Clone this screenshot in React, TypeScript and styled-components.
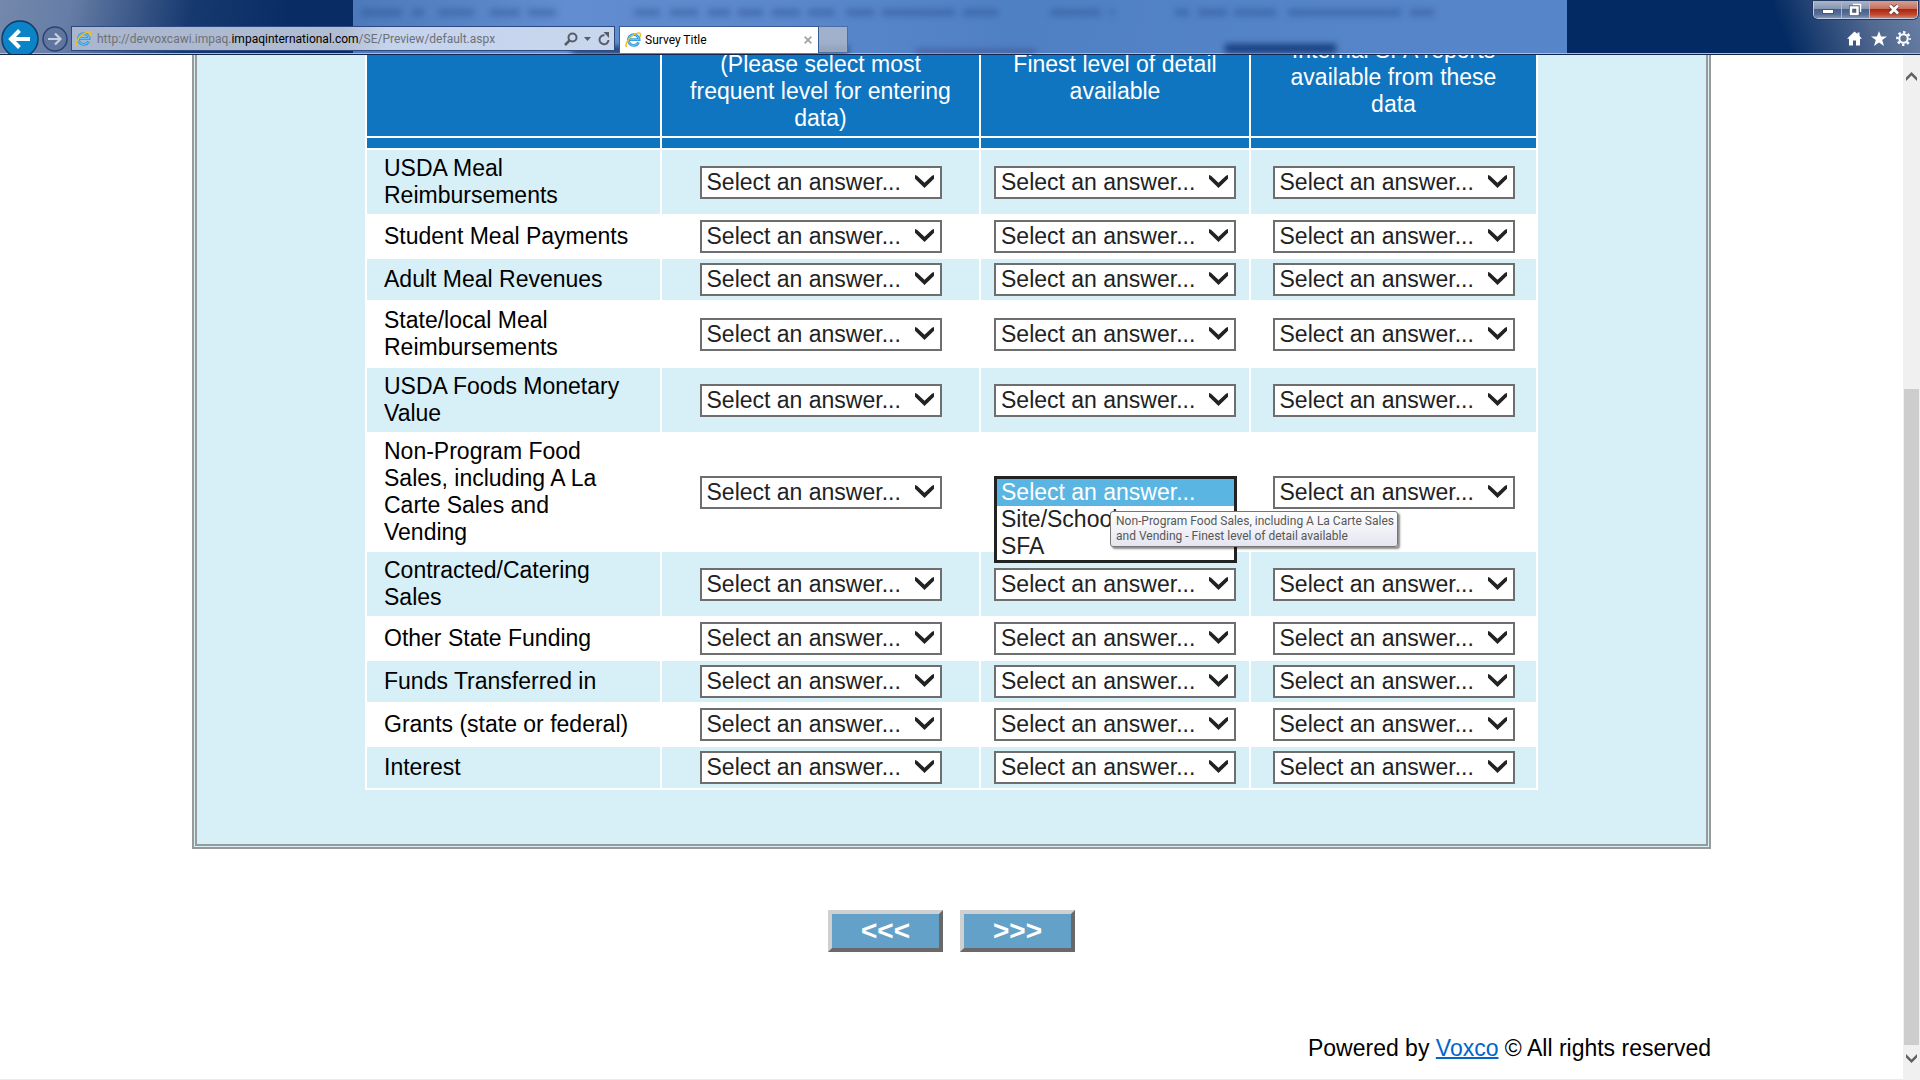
import React from "react";
import styled, { createGlobalStyle } from "styled-components";

const GlobalStyle = createGlobalStyle`
  *, *::before, *::after { box-sizing: border-box; }
  html, body, #root { height: 100%; }
  body {
    margin: 0;
    overflow: hidden;
    background: #fff;
    color: #000;
    font: 23px/27px "Liberation Sans", Arial, sans-serif;
  }
`;

const uiFont = `Roboto, "Open Sans", sans-serif`;

const Window = styled.div`
  display: flex;
  flex-direction: column;
  height: 100vh;
`;

/* ---------- browser frame ---------- */

const TitleBar = styled.header`
  position: relative;
  display: flex;
  align-items: flex-end;
  flex: none;
  height: 55px;
  padding-left: 1px;
  overflow: hidden;
  border-bottom: 1px solid #14254d;
  box-shadow: inset 0 -1px 0 #a9bde2;
  background:
    linear-gradient(100deg, #7388ab 0, #667da6 70px, #16396f 190px, #0a2c65 290px, #0a2c65 100%) 0 0 / 353px 100% no-repeat,
    linear-gradient(70deg, #032a62 0, #032a62 60%, #50678f 84%, #6a80a6 100%) 100% 0 / 353px 100% no-repeat,
    linear-gradient(100deg, #4d7abc 353px, #628dd0 560px, #5a87cb 800px, #5080c4 1000px, #5584c8 1300px, #5b88cc 100%);
`;

const Glass = styled.svg`
  position: absolute;
  inset: 0;
  width: 100%;
  height: 53px;
  filter: blur(3px);
`;

const NavButton = styled.button`
  position: relative;
  display: block;
  padding: 0;
  border: 0;
  background: none;
  line-height: 0;
`;

const ForwardButton = styled(NavButton)`
  margin: 0 3px 2px;
`;

const AddressBar = styled.form`
  position: relative;
  display: flex;
  align-items: center;
  width: 544px;
  height: 25px;
  margin: 0 4px 3px 0;
  padding: 0 3px;
  border: 1px solid #2d4a80;
  background: linear-gradient(90deg, #a9b6cd, #b1bdd3 50%, #c5d3ec 58%, #c8d6ee);
  color: #6d7178;
  font: 12px/22px ${uiFont};
`;

const Url = styled.a`
  flex: 1;
  margin-left: 6px;
  color: inherit;
  text-decoration: none;
  white-space: nowrap;

  b {
    color: #000;
    font-weight: 400;
  }
`;

const BarButton = styled(NavButton)`
  margin-left: 6px;
`;

const Tab = styled.div`
  position: relative;
  display: flex;
  align-items: center;
  width: 200px;
  height: 27px;
  margin-bottom: 1px;
  padding: 0 6px 0 5px;
  border: 1px solid #3a5c96;
  border-bottom: 0;
  background: #fff;
  color: #000;
  font: 12px/26px ${uiFont};
`;

const TabTitle = styled.span`
  flex: 1;
  margin-left: 4px;
`;

const NewTab = styled.button`
  position: relative;
  width: 29px;
  height: 27px;
  margin-bottom: 1px;
  padding: 0;
  border: 1px solid #4a6da8;
  border-left: 0;
  background: rgba(178, 188, 203, 0.8);
`;

const FrameEnd = styled.div`
  position: relative;
  display: flex;
  flex-direction: column;
  align-items: flex-end;
  justify-content: space-between;
  height: 53px;
  margin-left: auto;
  padding: 0 2px 8px 0;
`;

const WindowControls = styled.div`
  display: flex;
  height: 18px;
  overflow: hidden;
  border: 1px solid #c0cbe0;
  border-top: 0;
  border-radius: 0 0 5px 5px;
  box-shadow: 0 0 0 1px #25385f;
`;

const Control = styled.button<{ $close?: boolean }>`
  display: grid;
  place-items: center;
  width: ${(p) => (p.$close ? 47 : 28)}px;
  height: 17px;
  padding: 0;
  border: 0;
  border-right: ${(p) => (p.$close ? 0 : 1)}px solid #aab8d0;
  background: ${(p) =>
    p.$close
      ? "linear-gradient(#d7a090, #c8705e 45%, #ae2411 50%, #c04a30 80%, #d8806a)"
      : "linear-gradient(#a9b5ca, #8596b3 45%, #48608a 50%, #5a7199 80%, #8296b8)"};
`;

const Tools = styled.div`
  display: flex;
  gap: 9px;
  padding-right: 7px;
`;

/* ---------- page ---------- */

const Body = styled.div`
  display: flex;
  flex: 1;
  min-height: 0;
`;

const Page = styled.main`
  display: flex;
  flex: 1;
  flex-direction: column;
  justify-content: flex-end;
  overflow: hidden;
  padding: 0 192px 17px;
  border-bottom: 1px solid #ebebeb;
`;

const Panel = styled.section`
  padding: 54px 0;
  border: 5px double #999;
  background: #d7eff6;
`;

const Grid = styled.table`
  margin: 0 auto;
  border-collapse: separate;
  border-spacing: 2px;
  table-layout: fixed;
  width: 1173px;
  background: #fff;
`;

const Col = styled.col<{ $width: number }>`
  width: ${(p) => p.$width}px;
`;

const HeadCell = styled.th<{ $low?: boolean }>`
  height: 117px;
  padding: 4px 20px;
  background: #0f75c1;
  color: #fff;
  font-weight: 400;
  text-align: center;
  vertical-align: ${(p) => (p.$low ? "bottom" : "middle")};
`;

const StripCell = styled.td`
  height: 10px;
  padding: 0;
  background: #0f75c1;
`;

const Row = styled.tr<{ $tinted: boolean; $tall: boolean }>`
  height: ${(p) => (p.$tall ? 64 : 41)}px;
  background: ${(p) => (p.$tinted ? "#d7eff6" : "#fff")};
`;

const RowLabel = styled.th`
  padding: 4px 24px 4px 17px;
  font-weight: 400;
  text-align: left;
`;

const AnswerCell = styled.td`
  padding: 4px 0;
`;

const SelectBox = styled.div`
  position: relative;
  width: 242px;
  height: 33px;
  margin: 0 auto;
`;

const Select = styled.select`
  display: block;
  width: 100%;
  height: 100%;
  padding: 0 5px;
  appearance: none;
  border: 2px solid #6e6e6e;
  border-radius: 0;
  background: #fff;
  color: #222;
  font: inherit;
`;

const Arrow = styled.svg`
  position: absolute;
  top: 9px;
  right: 8px;
  pointer-events: none;
`;

const Options = styled.ul`
  position: absolute;
  z-index: 1;
  top: 0;
  left: 0;
  width: 243px;
  margin: 0;
  padding: 0;
  border: 3px solid #222;
  background: #fff;
  color: #222;
  list-style: none;
`;

const Option = styled.li<{ $active?: boolean }>`
  padding-left: 4px;
  background: ${(p) => (p.$active ? "#5ab5e3" : "#fff")};
  color: ${(p) => (p.$active ? "#fff" : "#222")};
`;

const Tooltip = styled.div`
  position: absolute;
  z-index: 2;
  top: 35px;
  left: 116px;
  width: 288px;
  padding: 2px 5px;
  border: 1px solid #767676;
  border-radius: 3px;
  background: linear-gradient(#fff, #e4e5f0);
  box-shadow: 2px 2px 2px rgba(0, 0, 0, 0.45);
  color: #575757;
  font: 12px/15px ${uiFont};
  white-space: nowrap;
`;

const Pager = styled.nav`
  display: flex;
  justify-content: center;
  gap: 17px;
  margin: 61px 0 83px;
`;

const PagerButton = styled.button`
  width: 115px;
  height: 42px;
  padding: 0;
  border: 4px solid;
  border-color: #cfd1d1 #696969 #696969 #cfd1d1;
  background: #64a1c8;
  color: #fff;
  font: bold 28px/32px "Liberation Sans", Arial, sans-serif;
`;

const Footer = styled.footer`
  text-align: right;

  a {
    color: #0066cc;
    text-decoration-thickness: 2px;
  }
`;

const ScrollBar = styled.div`
  display: flex;
  flex-direction: column;
  align-items: center;
  flex: none;
  width: 17px;
  padding: 17px 0;
  background: #f0f0f0;
`;

const Track = styled.div`
  display: flex;
  flex: 1;
  flex-direction: column;
  align-self: stretch;
  justify-content: flex-end;
  padding: 0 1px 9px;
`;

const Thumb = styled.div`
  height: 68%;
  background: #cdcdcd;
`;

/* ---------- drawings ---------- */

const glassWords = [
  [361, 41], [412, 12], [438, 36], [490, 30], [528, 28], [634, 26], [670, 28], [708, 22],
  [738, 25], [772, 28], [808, 27], [846, 28], [882, 73], [963, 35], [1050, 51], [1110, 4],
  [1175, 14], [1198, 29], [1234, 42], [1288, 113], [1410, 24],
];

const IeLogo = () => (
  <svg width="16" height="16" viewBox="0 0 16 16" aria-hidden="true">
    <path d="M13.6 10.3a5.4 5.4 0 1 1 .5-2.6H4.4" fill="none" stroke="#2f9bdc" strokeWidth="2.8" />
    <path d="M13.6 10.3a5.4 5.4 0 1 1 .5-2.6H4.8" fill="none" stroke="#7cc8f2" strokeWidth="1" />
    <path d="M1.6 15C-.4 13 2.600 7.400 7 4 11 .9 15.200 0 15.400 2.200c.1.900-.3 2-.9 3" fill="none" stroke="#f3bd1c" strokeWidth="1.5" />
  </svg>
);

const ScrollArrow = ({ down }: { down?: boolean }) => (
  <svg width="11" height="9" viewBox="0 0 11 9" aria-hidden="true">
    <path d={down ? "M0 0v3.500L5.500 9 11 3.500V0L5.500 5.500z" : "M0 9V5.500L5.500 0 11 5.500V9L5.500 3.500z"} fill="#606060" />
  </svg>
);

/* ---------- content ---------- */

const columns = [
  "(Please select most frequent level for entering data)",
  "Finest level of detail available",
  "Internal SFA reports available from these data",
];

const rows: { label: string; tall?: boolean; open?: number }[] = [
  { label: "USDA Meal Reimbursements", tall: true },
  { label: "Student Meal Payments" },
  { label: "Adult Meal Revenues" },
  { label: "State/local Meal Reimbursements", tall: true },
  { label: "USDA Foods Monetary Value", tall: true },
  { label: "Non-Program Food Sales, including A La Carte Sales and Vending", tall: true, open: 1 },
  { label: "Contracted/Catering Sales", tall: true },
  { label: "Other State Funding" },
  { label: "Funds Transferred in" },
  { label: "Grants (state or federal)" },
  { label: "Interest" },
];

const Answer = ({ label, open }: { label: string; open: boolean }) => (
  <SelectBox>
    <Select aria-label={label}>
      <option>Select an answer...</option>
      <option>Site/School</option>
      <option>SFA</option>
    </Select>
    <Arrow width="19" height="13" viewBox="0 0 19 13" aria-hidden="true">
      <path d="M0 0l2 .8 7.500 7L17 .8 19 0v3.800L9.500 13 0 3.800z" fill="#222" />
    </Arrow>
    {open && (
      <>
        <Options role="listbox" aria-label={label}>
          <Option role="option" aria-selected="true" $active>Select an answer...</Option>
          <Option role="option" aria-selected="false">Site/School</Option>
          <Option role="option" aria-selected="false">SFA</Option>
        </Options>
        <Tooltip role="tooltip">
          Non-Program Food Sales, including A La Carte Sales
          <br />
          and Vending - Finest level of detail available
        </Tooltip>
      </>
    )}
  </SelectBox>
);

const BrowserFrame = () => (
  <TitleBar>
    <Glass aria-hidden="true">
      {glassWords.map(([x, w]) => (
        <rect key={x} x={x} y="9" width={w} height="7" fill="#284f91" opacity="0.45" />
      ))}
      <rect x="572" y="47" width="276" height="10" fill="#0f2c5c" />
      <rect x="916" y="50" width="120" height="6" fill="#3b4a86" />
      <rect x="1225" y="44" width="111" height="14" fill="#183f7e" />
    </Glass>
    <NavButton aria-label="Back">
      <svg width="38" height="34" viewBox="0 0 38 34">
        <circle cx="19" cy="19" r="18" fill="#0a84c6" stroke="#123a66" strokeWidth="1.500" />
        <path d="M29 19H11M18.500 10.500L10 19l8.500 8.500" fill="none" stroke="#fff" strokeWidth="4" />
      </svg>
    </NavButton>
    <ForwardButton aria-label="Forward">
      <svg width="26" height="26" viewBox="0 0 26 26">
        <circle cx="13" cy="13" r="12" fill="#5a7099" fillOpacity="0.6" stroke="#2b4271" strokeWidth="1.500" />
        <path d="M6 13h12M13 7.500l5.500 5.500-5.500 5.500" fill="none" stroke="#c6cedd" strokeWidth="2.200" />
      </svg>
    </ForwardButton>
    <AddressBar onSubmit={(e) => e.preventDefault()}>
      <IeLogo />
      <Url href="#">
        http://devvoxcawi.impaq.<b>impaqinternational.com</b>/SE/Preview/default.aspx
      </Url>
      <BarButton type="button" aria-label="Search">
        <svg width="14" height="14" viewBox="0 0 14 14" fill="none" stroke="#565c68" strokeWidth="2">
          <circle cx="8.500" cy="5.500" r="4" />
          <path d="M5.500 8.500L1 13" strokeWidth="2.500" />
        </svg>
      </BarButton>
      <BarButton type="button" aria-label="Show address list">
        <svg width="7" height="4" viewBox="0 0 7 4"><path d="M0 0h7L3.500 4z" fill="#565c68" /></svg>
      </BarButton>
      <BarButton type="button" aria-label="Refresh">
        <svg width="14" height="14" viewBox="0 0 14 14">
          <path d="M11.500 8a4.500 4.500 0 1 1-4-4.700" fill="none" stroke="#565c68" strokeWidth="2" />
          <path d="M6.500 0h5.500v6z" fill="#565c68" />
        </svg>
      </BarButton>
    </AddressBar>
    <Tab>
      <IeLogo />
      <TabTitle>Survey Title</TabTitle>
      <NavButton aria-label="Close tab">
        <svg width="8" height="8" viewBox="0 0 8 8"><path d="M.7.7l6.600 6.600M7.300.7L.7 7.300" stroke="#a3a3a3" strokeWidth="1.800" /></svg>
      </NavButton>
    </Tab>
    <NewTab aria-label="New tab" />
    <FrameEnd>
      <WindowControls>
        <Control aria-label="Minimize">
          <svg width="12" height="10" viewBox="0 0 12 10"><rect x=".5" y="4.500" width="11" height="4" fill="#fff" stroke="#46546f" /></svg>
        </Control>
        <Control aria-label="Restore">
          <svg width="13" height="13" viewBox="0 0 13 13" fill="none">
            <path d="M4 1.500h7.500V9" stroke="#fff" strokeWidth="1.500" />
            <rect x="2" y="4.500" width="6.500" height="6.500" stroke="#46546f" strokeWidth="4" />
            <rect x="2" y="4.500" width="6.500" height="6.500" stroke="#fff" strokeWidth="2.500" />
          </svg>
        </Control>
        <Control aria-label="Close" $close>
          <svg width="12" height="11" viewBox="0 0 12 11">
            <path d="M2 1.500l8 8M10 1.500l-8 8" stroke="#5b3a3d" strokeWidth="4.200" />
            <path d="M2 1.500l8 8M10 1.500l-8 8" stroke="#fff" strokeWidth="2.800" />
          </svg>
        </Control>
      </WindowControls>
      <Tools>
        <NavButton aria-label="Home">
          <svg width="15" height="15" viewBox="0 0 15 15">
            <path d="M7.500.5L0 7.800h2V14.500h4V9.500h3v5h4V7.800h2L12.500 5V1.500h-2V3z" fill="#fff" />
          </svg>
        </NavButton>
        <NavButton aria-label="Favorites">
          <svg width="16" height="15" viewBox="0 0 16 15">
            <path d="M8 0l2 5.600h6l-4.800 3.500 1.800 5.900L8 11.500 3 15l1.800-5.900L0 5.600h6z" fill="#fff" />
          </svg>
        </NavButton>
        <NavButton aria-label="Tools">
          <svg width="15" height="15" viewBox="0 0 15 15" fill="none" stroke="#fff">
            <circle cx="7.500" cy="7.500" r="4.200" strokeWidth="2" />
            <circle cx="7.500" cy="7.500" r="6.200" strokeWidth="2.400" strokeDasharray="2.430 2.440" strokeDashoffset="1.200" />
          </svg>
        </NavButton>
      </Tools>
    </FrameEnd>
  </TitleBar>
);

export default function App() {
  return (
    <Window>
      <GlobalStyle />
      <BrowserFrame />
      <Body>
        <Page>
          <Panel>
            <Grid>
              <colgroup>
                <Col $width={293} />
                <Col $width={317} />
                <Col $width={268} />
                <Col $width={285} />
              </colgroup>
              <thead>
                <tr>
                  <HeadCell as="td" />
                  {columns.map((title, i) => (
                    <HeadCell key={title} scope="col" $low={i === 0}>{title}</HeadCell>
                  ))}
                </tr>
                <tr>
                  <StripCell />
                  <StripCell />
                  <StripCell />
                  <StripCell />
                </tr>
              </thead>
              <tbody>
                {rows.map((row, r) => (
                  <Row key={row.label} $tinted={r % 2 === 0} $tall={!!row.tall}>
                    <RowLabel scope="row">{row.label}</RowLabel>
                    {columns.map((title, c) => (
                      <AnswerCell key={title}>
                        <Answer label={`${row.label} - ${title}`} open={row.open === c} />
                      </AnswerCell>
                    ))}
                  </Row>
                ))}
              </tbody>
            </Grid>
          </Panel>
          <Pager aria-label="Survey pages">
            <PagerButton type="button">&lt;&lt;&lt;</PagerButton>
            <PagerButton type="button">&gt;&gt;&gt;</PagerButton>
          </Pager>
          <Footer>
            Powered by <a href="#">Voxco</a> © All rights reserved
          </Footer>
        </Page>
        <ScrollBar aria-hidden="true">
          <ScrollArrow />
          <Track>
            <Thumb />
          </Track>
          <ScrollArrow down />
        </ScrollBar>
      </Body>
    </Window>
  );
}
